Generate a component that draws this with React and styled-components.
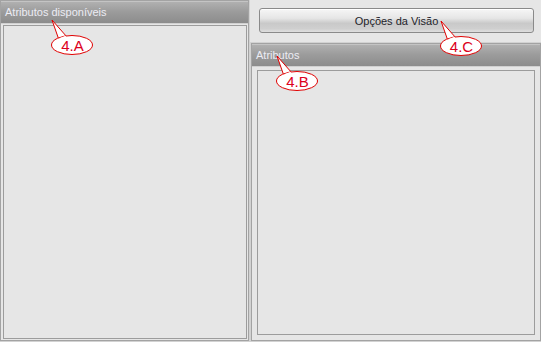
import React from 'react';
import styled, { createGlobalStyle } from 'styled-components';

const GlobalStyle = createGlobalStyle`
    html, body {
        margin: 0;
        padding: 0;
        background: #e6e6e6;
    }
    body {
        font-family: "Liberation Sans", Arial, sans-serif;
    }
`

const Screen = styled.div`
    position: relative;
    width: 541px;
    height: 342px;
    display: flex;
    gap: 2px;
    background: #e6e6e6;
    overflow: hidden;
`

const Column = styled.div`
    display: flex;
    flex-direction: column;
    width: ${(p) => p.width}px;
    height: 100%;
`

const Panel = styled.div`
    flex: 1;
    display: flex;
    flex-direction: column;
    border: 1px solid #a3a3a3;
    box-shadow: 0 0 0 1px #d2d2d2;
    background: #e6e6e6;
    margin-bottom: 1px;
`

const PanelHeader = styled.div`
    height: 21px;
    line-height: 21px;
    padding-left: 4px;
    font-size: 11px;
    color: #ececf4;
    background: linear-gradient(#b0b0b0 0%, #9c9c9c 45%, #8c8c8c 100%);
    border-top: 1px solid #c4c4c4;
    border-bottom: 1px solid #d0d0d0;
    white-space: nowrap;
`

const PanelBody = styled.div`
    flex: 1;
    padding: ${(p) => p.pad};
    display: flex;
`

const ListBox = styled.div`
    flex: 1;
    border: 1px solid #9c9c9c;
    background: #e6e6e6;
`

const ButtonRow = styled.div`
    padding: 8px 7px 10px 8px;
`

const ViewButton = styled.button`
    width: 100%;
    height: 25px;
    border: 1px solid #8a8a8a;
    border-radius: 3px;
    background: linear-gradient(#f6f6f6 0%, #e6e6e6 40%, #c9c9c9 62%, #cfcfcf 85%, #dedede 100%);
    font-family: "Liberation Sans", Arial, sans-serif;
    font-size: 11px;
    color: #1e1e2a;
    padding: 0;
    box-shadow: inset 0 1px 0 #ffffff;
`

const Callout = styled.div`
    position: absolute;
    left: ${(p) => p.x}px;
    top: ${(p) => p.y}px;
    width: 42px;
    height: 20px;
`

const CalloutLabel = styled.span`
    position: absolute;
    inset: 0;
    display: flex;
    align-items: center;
    justify-content: center;
    font-size: 15px;
    color: #dc0020;
    padding-left: 1px;
`

// balão vermelho com a ponta apontando para o campo
const Bubble = ({ x, y, label }) => (
    <Callout x={x} y={y}>
        <svg width="60" height="40" viewBox="0 0 60 40" style={{ position: 'absolute', left: 0, top: -16, overflow: 'visible' }}>
            <path d="M8 21 L1 1 L16 18" fill="#fff" stroke="#e00000" strokeWidth="1" />
            <ellipse cx="21" cy="26" rx="20.5" ry="9.5" fill="#fff" stroke="#e00000" strokeWidth="1" />
            <path d="M9.2 20 L15 17.8" stroke="#fff" strokeWidth="2.2" />
        </svg>
        <CalloutLabel>{label}</CalloutLabel>
    </Callout>
)

const App = () => {
    return (
        <>
            <GlobalStyle />
            <Screen>
                <Column width={249}>
                    <Panel>
                        <PanelHeader>Atributos disponíveis</PanelHeader>
                        <PanelBody pad="1px 1px 1px 2px">
                            <ListBox />
                        </PanelBody>
                    </Panel>
                </Column>
                <Column width={290}>
                    <ButtonRow>
                        <ViewButton>Opções da Visão</ViewButton>
                    </ButtonRow>
                    <Panel>
                        <PanelHeader>Atributos</PanelHeader>
                        <PanelBody pad="3px 5px 5px 5px">
                            <ListBox />
                        </PanelBody>
                    </Panel>
                </Column>
                <Bubble x={51} y={35} label="4.A" />
                <Bubble x={276} y={71} label="4.B" />
                <Bubble x={440} y={36} label="4.C" />
            </Screen>
        </>
    );
}

export default App
